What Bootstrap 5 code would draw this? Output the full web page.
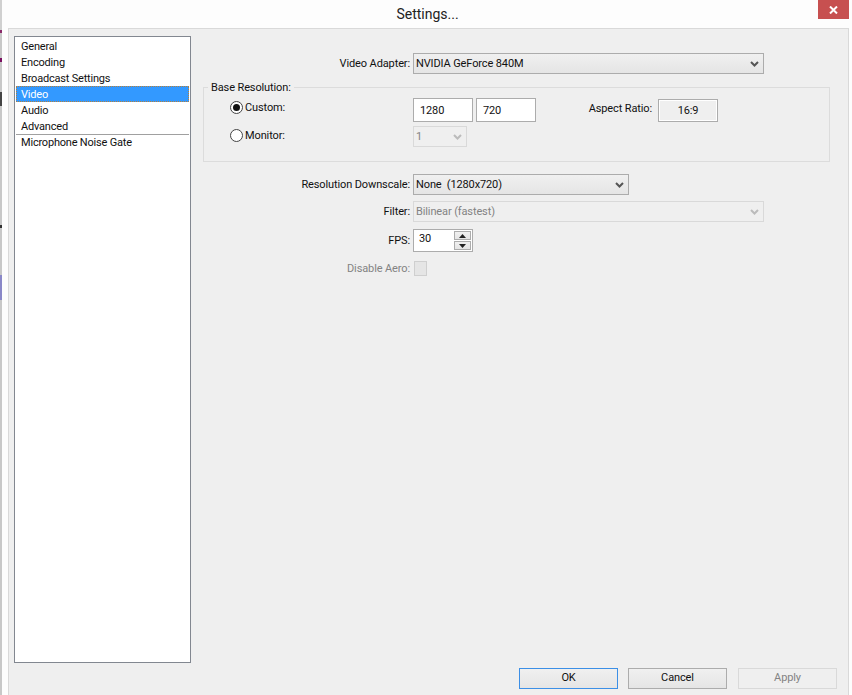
<!DOCTYPE html>
<html lang="en"><head><meta charset="utf-8"><title>Settings</title>
<link href="https://cdn.jsdelivr.net/npm/bootstrap@5.3.0/dist/css/bootstrap.min.css" rel="stylesheet">
<style>
html,body{height:695px;overflow:hidden;background:#fff}
body{font-family:"Roboto","Noto Sans",sans-serif;font-size:11px;line-height:16px;letter-spacing:-.12px;color:#111;position:relative}
.desk-strip{width:2px;background:linear-gradient(#d0d0d0 0 30px,#8a2a6a 30px 33px,#c8c8c8 33px 58px,#7a1060 58px 62px,#c8c8c8 62px 92px,#444 92px 106px,#c8c8c8 106px 225px,#333 225px 228px,#c8c8c8 228px 275px,#8a88c8 275px 300px,#c8c8c8 300px)}
.win-frame{flex:1;background:#fdfdfd;display:flex;flex-direction:column}
.title-bar{height:28px;position:relative;text-align:center;font-size:14px;line-height:28px;color:#222;letter-spacing:0;padding-left:1px}
.close-x{position:absolute;top:0;right:3px;width:31px;height:19px;background:#c75050;display:flex;align-items:center;justify-content:center}
.client{margin-left:6px;margin-right:3px;height:667px;background:#efefef;border:1px solid #d9d9d9;border-bottom:0;padding:7px 5px 0 5px;display:flex}
.side-list{width:177px;height:627px;background:#fff;border:1px solid #828790;padding:1px 1px;flex:none;border-radius:0}
.side-list .list-group-item{border:0;border-radius:0;background:transparent;padding:0 0 0 5px;height:16px;font-size:11px;line-height:18px;color:#111;letter-spacing:-.2px}
.side-list .list-group-item.sel{background:#3399ff;color:#fff;outline:1px dotted #b5803a;outline-offset:-1px}
.side-list .rule{height:0;border-top:1px solid #a0a0a0;margin:0 0 -1px}
.pane{width:627px;margin-left:12px;flex:none}
.lbl{width:210px;text-align:right;padding-right:3px;padding-top:1px;flex:none}
.row-a{display:flex;align-items:center}
.ctl{font-size:11px;line-height:16px;letter-spacing:-.12px;color:#111;padding:1px 0 0 2px;border:1px solid #acacac;border-radius:0;height:21px;box-shadow:none;
 background-image:url("data:image/svg+xml,%3Csvg xmlns='http://www.w3.org/2000/svg' width='9' height='6'%3E%3Cpath d='M1 1l3.500 3.500L8 1' fill='none' stroke='%23555' stroke-width='2'/%3E%3C/svg%3E"),linear-gradient(#f0f0f0,#e5e5e5);
 background-repeat:no-repeat;background-position:right 4px center,0 0;background-size:9px 6px,100% 100%}
.ctl:disabled{background-image:url("data:image/svg+xml,%3Csvg xmlns='http://www.w3.org/2000/svg' width='9' height='6'%3E%3Cpath d='M1 1l3.500 3.500L8 1' fill='none' stroke='%23bbb' stroke-width='2'/%3E%3C/svg%3E");background-color:#efefef;border-color:#d9d9d9;color:#838383}
.w-adapter{width:351px}.w-down{width:216px}.w-mon{width:54px}
.txt{font-size:11px;line-height:16px;letter-spacing:-.12px;border:1px solid #acacac;border-radius:0;height:24px;padding:0 0 0 6px;width:60px;color:#111;background:#fff;box-shadow:none}
.txt-gap{margin-left:3px}
.grp{height:75px;margin-top:13px;border:1px solid #dcdcdc;position:relative;padding:10px 0 0 26px}
.grp-title{position:absolute;left:4px;top:-8px;background:#efefef;padding:0 3px}
.rdo{width:13px;height:13px;border:1px solid #444;border-radius:50%;background:#fff;display:flex;align-items:center;justify-content:center;flex:none;margin-right:2px}
.rdo-dot{width:7px;height:7px;border-radius:50%;background:#111}
.rdo-cell{width:183px;display:flex;align-items:center;flex:none;margin-top:-5px}
.rdo-cell.low{margin-top:-2px}
.asp-lbl{width:116px;text-align:right;flex:none;margin-top:-2px}
.asp-box{width:60px;height:23px;border:1px solid #acacac;background:#efefef;box-shadow:inset 0 0 0 1px #fff;text-align:center;line-height:21px;margin-left:6px}
.muted-t{color:#838383}
.spin{width:60px;height:23px;border:1px solid #acacac;background:#fff;display:flex;padding:1px 0 1px 5px;justify-content:space-between}
.spin-btns{width:17px;display:flex;flex-direction:column;gap:1px;margin-right:1px}
.spin-btn{flex:1;background:linear-gradient(#f0f0f0,#e5e5e5);border:1px solid #acacac;display:flex;align-items:center;justify-content:center}
.chk{width:13px;height:15px;background:#e5e5e5;border:1px solid #cfcfcf;margin-left:1px}
.foot{display:flex;justify-content:flex-end}
.act{width:99px;height:21px;font-size:11px;line-height:16px;letter-spacing:-.12px;padding:0 0 1px;border:1px solid #acacac;border-radius:0;background:linear-gradient(#f0f0f0,#e5e5e5);color:#111;margin-left:10px}
.act.focus-b{border-color:#3c8fe6}
.act.last-b{margin-left:11px}
.act:disabled{opacity:1;border-color:#d9d9d9;background:#efefef;color:#838383}
</style></head><body>
<div class="d-flex" style="height:695px">
<div class="desk-strip"></div>
<div class="win-frame">
 <div class="title-bar">Settings...
  <div class="close-x"><svg width="9" height="8" viewBox="0 0 9 8"><path d="M1 .5l7 7M8 .5l-7 7" stroke="#fff" stroke-width="2"/></svg></div>
 </div>
 <div class="client position-relative">
  <div class="side-list list-group">
   <div class="list-group-item">General</div>
   <div class="list-group-item">Encoding</div>
   <div class="list-group-item">Broadcast Settings</div>
   <div class="list-group-item sel">Video</div>
   <div class="list-group-item">Audio</div>
   <div class="list-group-item">Advanced</div>
   <div class="rule"></div>
   <div class="list-group-item">Microphone Noise Gate</div>
  </div>
  <div class="pane">
   <div class="row-a" style="margin-top:17px"><div class="lbl">Video Adapter:</div><select class="form-select ctl w-adapter"><option>NVIDIA GeForce 840M</option></select></div>
   <div class="grp">
    <div class="grp-title">Base Resolution:</div>
    <div class="row-a"><div class="rdo-cell"><span class="rdo"><span class="rdo-dot"></span></span>Custom:</div>
      <input class="form-control txt" value="1280"><input class="form-control txt txt-gap" value="720">
      <div class="asp-lbl">Aspect Ratio:</div><div class="asp-box">16:9</div></div>
    <div class="row-a" style="margin-top:4px"><div class="rdo-cell low"><span class="rdo"></span>Monitor:</div><select class="form-select ctl w-mon" disabled><option>1</option></select></div>
   </div>
   <div class="row-a" style="margin-top:12px"><div class="lbl">Resolution Downscale:</div><select class="form-select ctl w-down"><option>None&nbsp; (1280x720)</option></select></div>
   <div class="row-a" style="margin-top:6px"><div class="lbl">Filter:</div><select class="form-select ctl w-adapter" disabled><option>Bilinear (fastest)</option></select></div>
   <div class="row-a" style="margin-top:7px"><div class="lbl">FPS:</div><div class="spin"><span>30</span><div class="spin-btns"><div class="spin-btn"><svg width="7" height="4"><path d="M3.500 0L7 4H0z" fill="#222"/></svg></div><div class="spin-btn"><svg width="7" height="4"><path d="M0 0h7L3.500 4z" fill="#222"/></svg></div></div></div></div>
   <div class="row-a" style="margin-top:8px"><div class="lbl muted-t">Disable Aero:</div><div class="chk"></div></div>
  </div>
  <div class="foot position-absolute" style="right:11px;bottom:6px">
   <button class="btn act focus-b">OK</button><button class="btn act">Cancel</button><button class="btn act last-b" disabled>Apply</button>
  </div>
 </div>
</div>
</div>
<script src="https://cdn.jsdelivr.net/npm/bootstrap@5.3.0/dist/js/bootstrap.bundle.min.js"></script>
</body></html>
